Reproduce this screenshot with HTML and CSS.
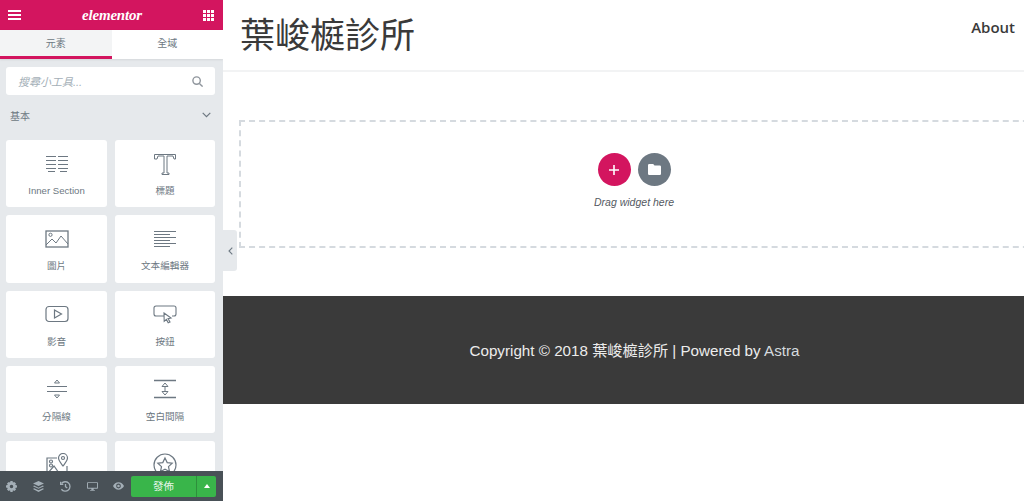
FILE: index.html
```html
<!DOCTYPE html>
<html lang="zh-Hant">
<head>
    <meta charset="UTF-8">
    <meta name="viewport" content="width=device-width, initial-scale=1.0">
    <title>葉峻榳診所</title>
    <link rel="stylesheet" href="styles.css">
</head>
<body>
    <div class="editor">
        <aside class="panel">
            <div class="panel-header">
                <svg class="panel-icon" width="13" height="10" viewBox="0 0 13 10"><path d="M0 0h13v2H0zM0 4h13v2H0zM0 8h13v2H0z" fill="#fff"/></svg>
                <span class="logo">elementor</span>
                <svg class="panel-icon" width="11" height="11" viewBox="0 0 11 11" fill="#fff"><path d="M0 0h3v3H0zM4 0h3v3H4zM8 0h3v3H8zM0 4h3v3H0zM4 4h3v3H4zM8 4h3v3H8zM0 8h3v3H0zM4 8h3v3H4zM8 8h3v3H8z"/></svg>
            </div>
            <div class="tabs">
                <div class="tab active">元素</div>
                <div class="tab">全域</div>
            </div>
            <div class="panel-scroll">
                <div class="search">
                    <span>搜尋小工具...</span>
                    <svg width="11" height="11" viewBox="0 0 11 11" fill="none" stroke="#8f959c" stroke-width="1.4"><circle cx="4.6" cy="4.6" r="3.7"/><path d="M7.4 7.4l3.2 3.2"/></svg>
                </div>
                <div class="category">
                    <span>基本</span>
                    <svg width="9" height="6" viewBox="0 0 9 6" fill="none" stroke="#6d7882" stroke-width="1.2"><path d="M.7.8l3.8 3.8L8.300.8"/></svg>
                </div>
                <div class="widgets">
                    <div class="widget">
                        <svg width="24" height="18" viewBox="0 0 24 18" fill="none" stroke="#6d7882"><path d="M1 1.500h10M13 1.500h10M1 5.500h10M13 5.500h10M1 9.500h10M13 9.500h10M1 13.500h10M13 13.500h10M3 16.500h7M15 16.500h7"/></svg>
                        <span>Inner Section</span>
                    </div>
                    <div class="widget">
                        <svg width="24" height="22" viewBox="0 0 24 22" fill="none" stroke="#6d7882"><path d="M1.500 6V1.500h21V6h-1.500l-1-3H14v17h2v1.500H9V20h2V3H5L4 6z"/></svg>
                        <span>標題</span>
                    </div>
                    <div class="widget">
                        <svg width="24" height="18" viewBox="0 0 24 18" fill="none" stroke="#6d7882"><rect x="1" y="1" width="22" height="16" stroke-width="1.300"/><circle cx="5.500" cy="4.800" r="1.600"/><path d="M1 15l6-6 4 4 5-7 7 8"/></svg>
                        <span>圖片</span>
                    </div>
                    <div class="widget">
                        <svg width="24" height="18" viewBox="0 0 24 18" fill="none" stroke="#6d7882"><path d="M1 1.500h22M1 4.500h16M1 7.500h22M1 10.500h16M1 13.500h22M1 16.500h16"/></svg>
                        <span>文本編輯器</span>
                    </div>
                    <div class="widget">
                        <svg width="24" height="18" viewBox="0 0 24 18" fill="none" stroke="#6d7882" stroke-width="1.200"><rect x="1" y="1.500" width="22" height="15" rx="3"/><path d="M9.500 5l7 4-7 4z"/></svg>
                        <span>影音</span>
                    </div>
                    <div class="widget">
                        <svg width="24" height="18" viewBox="0 0 24 18" fill="none" stroke="#6d7882" stroke-width="1.100"><path d="M11 11H3a2 2 0 0 1-2-2V3a2 2 0 0 1 2-2h18a2 2 0 0 1 2 2v6a2 2 0 0 1-2 2h-2"/><path d="M11 8l7 5-3 .6 2 3.400-1.800 .8-1.800-3.400-2.200 2z" fill="#fff"/></svg>
                        <span>按鈕</span>
                    </div>
                    <div class="widget">
                        <svg width="24" height="20" viewBox="0 0 24 20" fill="none" stroke="#6d7882"><path d="M2 7.500h20M2 12.500h20"/><path d="M12 1l2.500 3h-5zM12 19l2.500-3h-5z"/></svg>
                        <span>分隔線</span>
                    </div>
                    <div class="widget">
                        <svg width="24" height="20" viewBox="0 0 24 20" fill="none" stroke="#6d7882"><path d="M1 1.500h22M1 18.500h22" stroke-width="1.300"/><path d="M12 4l3 3.500H9zM12 16l3-3.500H9zM12 7.500v5"/></svg>
                        <span>空白間隔</span>
                    </div>
                    <div class="widget">
                        <svg width="24" height="24" viewBox="0 0 24 24" fill="none" stroke="#6d7882" stroke-width="1.200"><path d="M12 5H2v18h20V13"/><path d="M2 21l7-8 5 7"/><rect x="4.500" y="7" width="3" height="3" rx="1.500"/><rect x="4.500" y="11" width="3" height="3" rx="1.500"/><path d="M18 13c-3-4-4.500-5.500-4.500-8a4.500 4.500 0 0 1 9 0c0 2.500-1.500 4-4.500 8z" fill="#fff"/><circle cx="18" cy="5" r="1.500"/></svg>
                    </div>
                    <div class="widget">
                        <svg width="24" height="24" viewBox="0 0 24 24" fill="none" stroke="#6d7882" stroke-width="1.200"><circle cx="12" cy="12" r="11"/><path d="M12 5l2.200 4.600 5 .6-3.700 3.400 1 5L12 16.200l-4.500 2.400 1-5-3.700-3.400 5-.6z"/></svg>
                    </div>
                </div>
            </div>
            <div class="panel-footer">
                <svg class="tool" width="11" height="11" viewBox="0 0 10 10"><path fill="#a4afb7" fill-rule="evenodd" d="M4 0h2l.3 1.400 1.200-.6 1.600 1.500-.7 1.200L10 4v2l-1.600.4.700 1.300-1.500 1.500-1.300-.7L6 10H4l-.3-1.500-1.300.7L.9 7.700l.7-1.300L0 6V4l1.600-.5-.7-1.200L2.500.8l1.200.6zM5 3.400a1.600 1.600 0 1 0 0 3.200 1.600 1.600 0 0 0 0-3.200z"/></svg>
                <svg class="tool" width="11" height="11" viewBox="0 0 10 10" fill="#a4afb7"><path d="M5 0l5 2.300L5 4.600 0 2.300zM1 4.200l4 1.900 4-1.900 1 .6L5 7.100 0 4.800zM1 6.700l4 1.800 4-1.800 1 .6L5 10 0 7.300z"/></svg>
                <svg class="tool" width="11" height="11" viewBox="0 0 10 10" fill="none" stroke="#a4afb7" stroke-width="1.200"><path d="M1.400 2.300A4.300 4.300 0 1 1 1.300 7.500"/><path d="M.6 .6v2.400h2.400M5 2.800v2.400l1.600 1"/></svg>
                <svg class="tool tool-wide" width="11" height="9" viewBox="0 0 14 11" fill="#a4afb7"><path fill-rule="evenodd" d="M1 0h12a1 1 0 0 1 1 1v6.500a1 1 0 0 1-1 1H8.500V10H10v1H4v-1h1.500V8.500H1a1 1 0 0 1-1-1V1a1 1 0 0 1 1-1zm.2 1.200v6h11.600v-6z"/></svg>
                <svg class="tool-eye" width="11" height="8" viewBox="0 0 12 8"><path fill="#a4afb7" fill-rule="evenodd" d="M6 0c2.700 0 4.800 1.800 6 4-1.200 2.200-3.300 4-6 4S1.200 6.200 0 4c1.200-2.200 3.300-4 6-4zm0 1.400a2.600 2.600 0 1 0 0 5.200 2.600 2.600 0 0 0 0-5.200z"/><circle cx="6" cy="4" r="1.400" fill="#a4afb7"/></svg>
                <div class="publish">
                    <span class="publish-label">發佈</span>
                    <span class="publish-arrow"></span>
                </div>
            </div>
        </aside>

        <main class="preview">
            <span class="collapse">
                <svg width="5" height="8" viewBox="0 0 5 8" fill="none" stroke="#6d7882" stroke-width="1.100"><path d="M4.300.6L1 4l3.300 3.400"/></svg>
            </span>
            <header class="site-header">
                <h1>葉峻榳診所</h1>
                <a class="nav-link">About</a>
            </header>
            <section class="content">
                <div class="dropzone">
                    <div class="drop-buttons">
                        <span class="round add">
                            <svg width="10" height="10" viewBox="0 0 10 10"><path d="M4.200 0h1.600v4.200H10v1.600H5.800V10H4.200V5.800H0V4.200h4.200z" fill="#fff"/></svg>
                        </span>
                        <span class="round folder">
                            <svg width="13" height="11" viewBox="0 0 13 11"><path d="M1.200 0h4l1.300 1.500h5.300a1.200 1.200 0 0 1 1.200 1.200v7.100a1.200 1.200 0 0 1-1.200 1.200H1.200A1.200 1.200 0 0 1 0 9.800V1.200A1.200 1.200 0 0 1 1.200 0z" fill="#fff"/></svg>
                        </span>
                    </div>
                    <p>Drag widget here</p>
                </div>
            </section>
            <footer class="site-footer">Copyright © 2018 葉峻榳診所 | Powered by <span class="astra">Astra</span></footer>
        </main>
    </div>
</body>
</html>
```

FILE: styles.css
```css
* {
    box-sizing: border-box;
}

html,
body {
    height: 100%;
}

body {
    margin: 0;
    overflow: hidden;
    font-family: "Liberation Sans", "Noto Sans CJK TC", sans-serif;
    background: #fff;
}

.editor {
    display: flex;
    height: 501px;
}

/* Left panel */
.panel {
    display: flex;
    flex-direction: column;
    flex: 0 0 223px;
    height: 501px;
    background: #e6e9ec;
    overflow: hidden;
}

.panel-header {
    display: flex;
    align-items: center;
    justify-content: space-between;
    flex: 0 0 30px;
    padding: 0 9px 0 8px;
    background: #d3155f;
}

.logo {
    font-family: "Liberation Serif", serif;
    font-style: italic;
    font-weight: 700;
    font-size: 15px;
    letter-spacing: -0.2px;
    color: #fff;
}

.tabs {
    display: flex;
    flex: 0 0 29px;
    background: #fff;
    box-shadow: 0 1px 2px rgba(0, 0, 0, 0.08);
}

.tab {
    flex: 1;
    padding-top: 6px;
    text-align: center;
    font-size: 10px;
    line-height: 16px;
    color: #6d7882;
}

.tab.active {
    background: #f3f4f5;
    border-bottom: 3px solid #d3155f;
}

.panel-scroll {
    flex: 1;
    min-height: 0;
    padding: 8px 8px 0 6px;
    overflow: hidden;
}

.search {
    display: flex;
    align-items: center;
    justify-content: space-between;
    height: 28px;
    padding: 0 12px;
    background: #fff;
    border-radius: 3px;
    font-size: 11px;
    font-style: italic;
    color: #a4afb7;
}

.category {
    display: flex;
    align-items: center;
    justify-content: space-between;
    height: 45px;
    padding: 0 4px 5px;
    font-size: 10px;
    color: #6d7882;
}

.widgets {
    display: grid;
    grid-template-columns: 101px 100px;
    grid-auto-rows: 67.3px;
    column-gap: 8px;
    row-gap: 8px;
}

.widget {
    display: flex;
    flex-direction: column;
    align-items: center;
    padding-top: 11.5px;
    background: #fff;
    border-radius: 3px;
    font-size: 9.6px;
    color: #6d7882;
}

.widget svg {
    flex: 0 0 24px;
}

.widget span {
    margin-top: 9.5px;
    line-height: 12px;
}

.panel-footer {
    display: flex;
    align-items: center;
    flex: 0 0 30px;
    padding-left: 6px;
    background: #495157;
}

.tool {
    margin-right: 16px;
    flex-shrink: 0;
}

.tool-wide {
    margin-right: 15px;
}

.tool-eye {
    flex-shrink: 0;
}

.publish {
    display: flex;
    flex: 0 0 85px;
    height: 21px;
    margin-left: auto;
    margin-right: 7px;
    border-radius: 2px;
    overflow: hidden;
    background: #39b54a;
}

.publish-label {
    flex: 1;
    font-size: 10.5px;
    line-height: 21px;
    text-align: center;
    color: #e8f5ea;
}

.publish-arrow {
    display: flex;
    align-items: center;
    justify-content: center;
    width: 20px;
    border-left: 1px solid #2e8f3c;
}

.publish-arrow::before {
    content: "";
    border-left: 3.500px solid transparent;
    border-right: 3.500px solid transparent;
    border-bottom: 4px solid #fff;
}

/* Page preview */
.preview {
    position: relative;
    flex: 1;
    min-width: 0;
    overflow: hidden;
}

.collapse {
    position: absolute;
    left: 0;
    top: 230px;
    display: flex;
    align-items: center;
    justify-content: center;
    width: 14px;
    height: 41px;
    background: #e6e9ec;
    border-radius: 0 3px 3px 0;
}

.site-header {
    display: flex;
    align-items: center;
    justify-content: space-between;
    height: 72px;
    padding: 0 9px 0 17px;
    border-bottom: 2px solid #f2f3f4;
}

.site-header h1 {
    margin: 2px 0 0;
    font-size: 35px;
    font-weight: 400;
    line-height: 1.2;
    color: #3a3a3a;
}

.nav-link {
    margin-bottom: 16px;
    font-family: "Open Sans", sans-serif;
    font-size: 15px;
    font-weight: 600;
    color: #3a3a3a;
}

.content {
    height: 224px;
    padding: 48px 0 0 16px;
}

.dropzone {
    width: 820px;
    height: 128px;
    padding-top: 31px;
    border: 2px dashed #d5dadf;
    border-right: 0;
    text-align: center;
}

.drop-buttons {
    display: flex;
    justify-content: center;
    gap: 7px;
    padding-right: 32px;
}

.round {
    display: flex;
    align-items: center;
    justify-content: center;
    width: 33px;
    height: 33px;
    border-radius: 50%;
}

.add {
    background: #d3155f;
}

.folder {
    background: #6d7882;
}

.dropzone p {
    margin: 10px 0 0;
    padding-right: 32px;
    font-size: 10.5px;
    font-style: italic;
    color: #54595f;
}

.site-footer {
    height: 108px;
    padding-left: 22px;
    line-height: 109px;
    background: #3a3a3a;
    text-align: center;
    font-size: 15.2px;
    color: #ececec;
}

.astra {
    color: #d5dadf;
}
```
